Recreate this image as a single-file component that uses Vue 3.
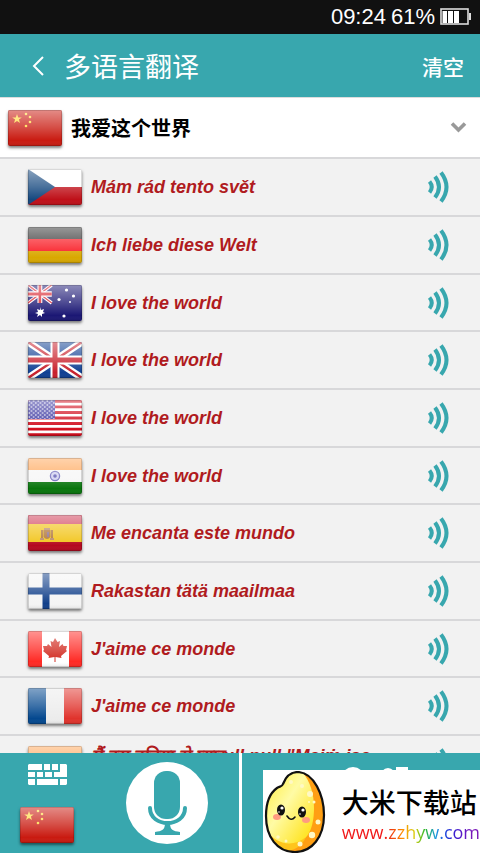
<template>
  <div class="app">
    <div class="status">
      <span>09:24</span>
      <span>61%</span>
      <svg class="status__battery" viewBox="0 0 31 18" aria-hidden="true">
        <rect x="1" y="1" width="27" height="15" fill="none" stroke="#ddd" stroke-width="1.600" />
        <path d="M29 5h2v7h-2z" fill="#ddd" />
        <path d="M2.500 3h4.500v12H2.500zM8 3h5v12H8zM14 3h5v12h-5z" fill="#fff" />
      </svg>
    </div>

    <header class="header">
      <button class="header__back" type="button" aria-label="返回">
        <svg viewBox="0 0 12 20" width="12" height="20">
          <path d="M11 1L2 10l9 9" fill="none" stroke="#fff" stroke-width="2" />
        </svg>
      </button>
      <h1 class="header__title">多语言翻译</h1>
      <button class="header__clear" type="button">清空</button>
    </header>

    <button class="source" type="button">
      <svg class="flag" viewBox="0 0 54 36"><use href="#flag-cn" /><use href="#flag-gloss" /></svg>
      <span class="source__text">我爱这个世界</span>
      <svg class="source__arrow" viewBox="0 0 16 11">
        <path d="M1.500 1.500L8 8l6.500-6.500" fill="none" stroke="#999" stroke-width="3.600" />
      </svg>
    </button>

    <ul class="list">
      <li v-for="(item, i) in items" :key="i" class="row" :class="{ 'row--long': item.long }">
        <svg class="flag" viewBox="0 0 54 36" aria-hidden="true">
          <use :href="`#flag-${item.flag}`" />
          <use href="#flag-gloss" />
        </svg>
        <span class="row__text">{{ item.text }}</span>
        <button class="row__speak" type="button" aria-label="朗读">
          <svg viewBox="0 0 22 32" width="22" height="32">
            <g fill="none" stroke="#38a7ae" stroke-width="4">
              <path d="M1.500 10.500q4.500 5.500 0 11" />
              <path d="M7 5.500q8 10.500 0 21" />
              <path d="M13 1.500q11 14.500 0 29" />
            </g>
          </svg>
        </button>
      </li>
    </ul>

    <footer class="footer">
      <div class="footer__side">
        <div class="footer__tools">
          <button class="footer__btn" type="button" aria-label="键盘">
            <svg viewBox="0 0 39 21" width="39" height="21" fill="#fff">
              <path d="M1 0h13v6H0V1zM16 0h6v6h-6zM24 0h6v6h-6zM32 0h6l1 1v12H26V8h6z" />
              <path d="M0 8h7v5H0zM9 8h6v5H9zM17 8h7v5h-7z" />
              <path d="M0 15h7v6H1l-1-1zM9 15h21v6H9zM32 15h7v5l-1 1h-6z" />
            </svg>
          </button>
          <button class="footer__btn" type="button" aria-label="中文">
            <svg class="flag" viewBox="0 0 54 36"><use href="#flag-cn" /><use href="#flag-gloss" /></svg>
          </button>
        </div>
        <button class="footer__mic" type="button" aria-label="语音">
          <svg viewBox="0 0 82 82" width="82" height="82">
            <circle cx="41" cy="41" r="41" fill="#fff" />
            <rect x="28" y="9" width="26" height="48" rx="12" fill="#38a7ae" />
            <path d="M24 46c0 20 35 20 35 0" fill="none" stroke="#38a7ae" stroke-width="4" stroke-linecap="round" />
            <path d="M39 61h5c0 7 3 8 10 9v3H29v-3c7-1 10-2 10-9z" fill="#38a7ae" />
          </svg>
        </button>
      </div>
      <div class="footer__side footer__side--right">
        <svg viewBox="0 0 66 22" width="66" height="22" fill="#fff">
          <ellipse cx="11" cy="11" rx="11" ry="10" />
          <path d="M40 5q6-6 12 0v3H40zM54 1h12v3H54z" />
        </svg>
      </div>
    </footer>

    <div class="badge">
      <svg class="badge__rice" viewBox="0 0 62 82" aria-hidden="true">
        <defs>
          <linearGradient id="rice" x1="0" y1="0" x2="1" y2="1">
            <stop offset=".1" stop-color="#ffef45" />
            <stop offset=".45" stop-color="#fffba5" />
            <stop offset=".85" stop-color="#ffe52b" />
          </linearGradient>
          <clipPath id="rice-clip">
            <path d="M19 13C22 5 27 1 34 1c16 1 26 23 26 43 0 22-12 37-29 37C13 81 2 66 2 45c0-14 4-23 11-28 3-2 5-1 6-4z" />
          </clipPath>
        </defs>
        <g clip-path="url(#rice-clip)">
          <path d="M0 0h62v82H0z" fill="#ff9f13" />
          <path d="M34-3c11 9 16 24 16 40 0 24-9 37-26 37-14 0-24-12-24-33V0z" fill="url(#rice)" />
          <path d="M0 54c8 19 28 24 42 12-6 13-18 16-28 13C5 76 0 65 0 54z" fill="#ffc51c" />
          <g fill="#fff8c5">
            <circle cx="46" cy="23" r="3" /><circle cx="50" cy="31" r="1.500" />
            <circle cx="54" cy="51" r="2.500" /><circle cx="48" cy="64" r="3.200" />
            <circle cx="36" cy="73" r="2.500" /><circle cx="22" cy="70" r="1.500" />
            <circle cx="14" cy="66" r="1.800" /><circle cx="38" cy="15" r="2" />
            <circle cx="45" cy="31" r="1" /><circle cx="27" cy="11" r="2" />
          </g>
        </g>
        <path d="M19 13C22 5 27 1 34 1c16 1 26 23 26 43 0 22-12 37-29 37C13 81 2 66 2 45c0-14 4-23 11-28 3-2 5-1 6-4z" fill="none" stroke="#111" stroke-width="2.200" />
        <ellipse cx="13" cy="46" rx="4" ry="3" fill="#ff9b80" />
        <ellipse cx="42" cy="49" rx="4" ry="3" fill="#ff9b80" />
        <ellipse cx="17" cy="39" rx="4" ry="5.500" fill="#111" />
        <ellipse cx="38" cy="41" rx="4" ry="5.500" fill="#111" />
        <g fill="#fff">
          <circle cx="18" cy="37" r="1.600" /><circle cx="39" cy="39" r="1.600" />
          <circle cx="15" cy="41" r=".8" /><circle cx="36" cy="43" r=".8" />
        </g>
        <path d="M23 45q4 6 8 1" fill="none" stroke="#111" stroke-width="1.600" stroke-linecap="round" />
      </svg>
      <div class="badge__body">
        <strong class="badge__name">大米下载站</strong>
        <a class="badge__link" href="#">www.zzhyw.com</a>
      </div>
    </div>

    <!-- flag artwork shared through <use> -->
    <svg class="sprite" aria-hidden="true">
      <defs>
        <linearGradient id="gloss" x1="0" y1="0" x2="0" y2="1">
          <stop offset="0" stop-color="#fff" stop-opacity=".5" />
          <stop offset=".5" stop-color="#fff" stop-opacity=".22" />
          <stop offset=".85" stop-color="#fff" stop-opacity="0" />
          <stop offset="1" stop-color="#000" stop-opacity=".1" />
        </linearGradient>
        <path id="star" d="M0-5L1.200-1.600H4.800L1.900.6 3 4 0 1.900-3 4-1.900.6-4.800-1.600H-1.200z" />
        <g id="flag-gloss">
          <rect width="54" height="36" fill="url(#gloss)" />
          <rect x=".5" y=".5" width="53" height="35" fill="none" stroke="#000" stroke-opacity=".15" />
        </g>
        <g id="flag-cn">
          <rect width="54" height="36" fill="#c91a10" />
          <g fill="#ffd93b">
            <use href="#star" x="9" y="9" />
            <circle cx="18" cy="4" r="1.300" /><circle cx="22" cy="7" r="1.300" />
            <circle cx="22" cy="12" r="1.300" /><circle cx="18" cy="16" r="1.300" />
          </g>
        </g>
        <g id="flag-cz">
          <rect width="54" height="18" fill="#fff" />
          <rect y="18" width="54" height="18" fill="#bf1019" />
          <path d="M0 0l27 18L0 36z" fill="#15487f" />
        </g>
        <g id="flag-de">
          <rect width="54" height="12" fill="#333" />
          <rect y="12" width="54" height="12" fill="#f91922" />
          <rect y="24" width="54" height="12" fill="#d9a800" />
        </g>
        <g id="flag-gb">
          <rect width="54" height="36" fill="#104093" />
          <path d="M0 0l54 36M54 0L0 36" stroke="#fff" stroke-width="7" />
          <path d="M0 0l54 36M54 0L0 36" stroke="#c8202c" stroke-width="2.400" />
          <path d="M27 0v36M0 18h54" stroke="#fff" stroke-width="9" />
          <path d="M27 0v36M0 18h54" stroke="#c8202c" stroke-width="5" />
        </g>
        <g id="flag-au">
          <rect width="54" height="36" fill="#1b1774" />
          <g transform="scale(.44 .5)">
            <path d="M0 0l54 36M54 0L0 36" stroke="#fff" stroke-width="7" />
            <path d="M0 0l54 36M54 0L0 36" stroke="#d8202c" stroke-width="3" />
            <path d="M27 0v36M0 18h54" stroke="#fff" stroke-width="11" />
            <path d="M27 0v36M0 18h54" stroke="#d8202c" stroke-width="6" />
          </g>
          <g fill="#fff">
            <path d="M12 22l1 3 3-1-1 3 2 1-3 1 0 3-2-2-3 2 1-3-3-1 3-1-1-3 3 1z" />
            <circle cx="38.500" cy="5" r="1.600" /><circle cx="45.500" cy="11" r="1.600" />
            <circle cx="31" cy="14.500" r="1.600" /><circle cx="36" cy="31" r="1.600" />
            <circle cx="42" cy="17" r="1" />
          </g>
        </g>
        <pattern id="us-stars" width="4.500" height="4" patternUnits="userSpaceOnUse">
          <circle cx="1.200" cy="1" r=".8" fill="#fff" /><circle cx="3.400" cy="3" r=".8" fill="#fff" />
        </pattern>
        <g id="flag-us">
          <rect width="54" height="36" fill="#fff" />
          <path
            d="M0 1.400h54M0 6.900h54M0 12.500h54M0 18h54M0 23.500h54M0 29.100h54M0 34.600h54"
            stroke="#d10a1a"
            stroke-width="2.800"
          />
          <rect width="27" height="19" fill="#3a35a0" />
          <rect width="27" height="19" fill="url(#us-stars)" />
        </g>
        <g id="flag-in">
          <rect width="54" height="12" fill="#ffa75a" />
          <rect y="12" width="54" height="12" fill="#f6f6f6" />
          <rect y="24" width="54" height="12" fill="#08750c" />
          <circle cx="27" cy="18" r="4.600" fill="#cfcff0" stroke="#6a66bb" stroke-width="1.300" />
          <circle cx="27" cy="18" r="1.800" fill="#5a55b0" />
        </g>
        <g id="flag-es">
          <rect width="54" height="36" fill="#b5091f" />
          <rect width="54" height="9" fill="#cf3a55" />
          <rect y="9" width="54" height="18" fill="#f2c51c" />
          <path d="M13 15h2v9h-2zM23 15h2v9h-2zM15.500 15h7v7q-3.500 4-7 0z" fill="#b0763a" />
          <path d="M16 13h6v2h-6zM12 23h4v2h-4zM22 23h4v2h-4z" fill="#b88a6a" />
          <path d="M19 17h2v5h-2z" fill="#8b6f8f" />
        </g>
        <g id="flag-fi">
          <rect width="54" height="36" fill="#f4f4f4" />
          <path d="M18 0v36M0 18h54" stroke="#12408a" stroke-width="7" />
        </g>
        <g id="flag-ca">
          <rect width="54" height="36" fill="#ff2a25" />
          <rect x="14" width="27" height="36" fill="#fff" />
          <path
            d="M27 7l2.500 4 2.500-1-1 6 3.500-3 1 2h3.500l-1 4 1 1-6 5 .5 2-6-1v5h-1v-5l-6 1 .5-2-6-5 1-1-1-4H19l1-2 3.500 3-1-6 2.500 1z"
            fill="#d12a20"
          />
        </g>
        <g id="flag-fr">
          <rect width="18" height="36" fill="#04488f" />
          <rect x="18" width="18" height="36" fill="#ececec" />
          <rect x="36" width="18" height="36" fill="#e0332c" />
        </g>
      </defs>
    </svg>
  </div>
</template>

<script setup>
import { ref } from 'vue'

const items = ref([
  { flag: 'cz', text: 'Mám rád tento svět' },
  { flag: 'de', text: 'Ich liebe diese Welt' },
  { flag: 'au', text: 'I love the world' },
  { flag: 'gb', text: 'I love the world' },
  { flag: 'us', text: 'I love the world' },
  { flag: 'in', text: 'I love the world' },
  { flag: 'es', text: 'Me encanta este mundo' },
  { flag: 'fi', text: 'Rakastan tätä maailmaa' },
  { flag: 'ca', text: "J'aime ce monde" },
  { flag: 'fr', text: "J'aime ce monde" },
  { flag: 'in', text: 'मैं इस दुनिया से प्यारull null "Maiṁ isa', long: true },
])
</script>

<style>
body {
  margin: 0;
  background: #f2f2f2;
}
</style>

<style scoped>
.app {
  position: relative;
  display: flex;
  flex-direction: column;
  height: 100vh;
  overflow: hidden;
  font-family: 'Liberation Sans', 'Noto Sans CJK SC', sans-serif;
}

button {
  padding: 0;
  border: none;
  background: none;
  font-family: inherit;
  color: inherit;
  cursor: pointer;
}

svg {
  display: block;
  flex: none;
}

.sprite {
  position: absolute;
  width: 0;
  height: 0;
}

.status {
  flex: none;
  display: flex;
  align-items: center;
  justify-content: flex-end;
  gap: 5px;
  height: 34px;
  padding-right: 9px;
  background: #111;
  color: #fff;
  font-size: 22px;
}

.status__battery {
  width: 31px;
  height: 18px;
}

.header {
  flex: none;
  display: flex;
  align-items: center;
  height: 63px;
  padding: 0 16px 0 32px;
  background: #38a7ae;
  color: #fff;
}

.header__title {
  flex: 1;
  margin: 0 0 0 20px;
  font-size: 27px;
  font-weight: 400;
}

.header__clear {
  font-size: 21px;
  font-weight: 500;
}

.source {
  flex: none;
  display: flex;
  align-items: center;
  gap: 9px;
  height: 60px;
  padding: 0 13px 0 8px;
  border-top: 1px solid #ddd;
  background: #fff;
  color: #000;
}

.source__text {
  flex: 1;
  font-size: 20px;
  font-weight: 700;
  text-align: left;
}

.source__arrow {
  width: 17px;
  height: 11px;
}

.flag {
  width: 54px;
  height: 36px;
  border-radius: 2px;
  box-shadow: 0 2px 3px rgba(0, 0, 0, 0.5);
}

.list {
  flex: 1;
  min-height: 0;
  margin: 0;
  padding: 0;
  overflow: hidden;
  list-style: none;
  background: #f2f2f2;
}

.row {
  display: flex;
  align-items: center;
  gap: 9px;
  box-sizing: border-box;
  height: 58px;
  padding: 0 30px 0 28px;
  border-top: 2px solid #d8d8da;
}

.row:nth-child(3n) {
  height: 57px;
}

.row__text {
  flex: 1;
  color: #b01b20;
  font-size: 18px;
  font-style: italic;
  font-weight: 700;
  line-height: 24px;
  white-space: nowrap;
}

/* long translations start at the top of the row */
.row--long .row__text {
  align-self: flex-start;
  padding-top: 8px;
}

.footer {
  flex: none;
  display: grid;
  grid-template-columns: 1fr 1fr;
  gap: 3px;
  height: 100px;
  background: #fff;
}

.footer__side {
  display: flex;
  align-items: center;
  gap: 52px;
  box-sizing: border-box;
  padding-left: 20px;
  background: #38a7ae;
}

.footer__side--right {
  align-items: flex-start;
  justify-content: center;
  padding: 13px 0 0 28px;
}

.footer__tools {
  display: flex;
  flex-direction: column;
  align-items: center;
  gap: 22px;
}

.footer__mic {
  border-radius: 50%;
}

.badge {
  position: absolute;
  right: 0;
  bottom: 0;
  display: flex;
  align-items: center;
  gap: 16px;
  height: 83px;
  padding-left: 1px;
  background: #fff;
}

.badge__rice {
  width: 62px;
  height: 82px;
}

.badge__body {
  display: flex;
  flex-direction: column;
  padding-top: 9px;
}

.badge__name {
  color: #000;
  font-size: 27px;
  font-weight: 500;
  line-height: 32px;
}

.badge__link {
  background: linear-gradient(90deg, #f01818 30%, #f04010 36%, #ff9000 44%, #d8d010 53%, #2eb82a 60%, #1a9ae0 68%, #1a50e0 74%, #3020d0 80%, #6018c8 88%, #7a18b8 95%);
  background-clip: text;
  color: transparent;
  font-family: 'Open Sans', sans-serif;
  font-size: 18px;
  font-weight: 500;
  line-height: 24px;
  text-decoration: none;
}
</style>
